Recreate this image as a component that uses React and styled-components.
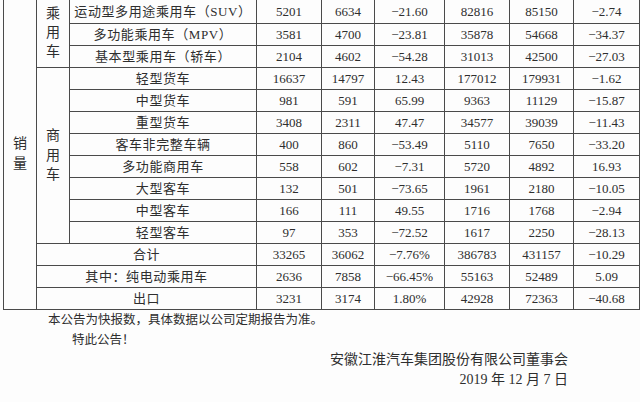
import styled, { createGlobalStyle } from "styled-components";

const GlobalStyle = createGlobalStyle`
  html, body {
    margin: 0;
    padding: 0;
    background: #fdfdfd;
  }
  body {
    width: 640px;
    height: 402px;
    overflow: hidden;
    color: #2e2e2e;
    font-family: "Liberation Serif", "Noto Sans CJK SC", serif;
  }
`;

const Page = styled.div`
  width: 640px;
  height: 402px;
  display: flex;
  flex-direction: column;
  overflow: hidden;
`;

// the table is cut at the top of the shot, so its top edge sits just above the page
const Sheet = styled.table`
  margin: -3px 0 0 3px;
  width: 636px;
  border-collapse: collapse;
  table-layout: fixed;
  font-size: 13px;
`;

const Row = styled.tr`
  height: ${({ $tall }) => ($tall ? 26 : 22)}px;
`;

const Cell = styled.td`
  border: 1px solid #4a4a4a;
  padding: 0;
  text-align: center;
  vertical-align: ${({ $low }) => ($low ? "bottom" : "middle")};
  padding-bottom: ${({ $low }) => ($low ? "5px" : "0")};
  line-height: 1;
  white-space: nowrap;
  overflow: hidden;
  letter-spacing: ${({ $wide }) => ($wide ? "0.6px" : "0")};
`;

const StackLabel = styled.div`
  display: flex;
  flex-direction: column;
  align-items: center;
  font-size: 14px;
  line-height: ${({ $step }) => $step}px;
`;

const Notes = styled.div`
  display: flex;
  flex-direction: column;
  font-size: 12.5px;
  line-height: 20px;
`;

const NoteLine = styled.div`
  padding-left: ${({ $indent }) => $indent}px;
`;

const Signature = styled.div`
  display: flex;
  flex-direction: column;
  align-items: flex-end;
  padding-right: 72px;
  font-size: 14px;
  line-height: 20px;
`;

const cols = [33, 33, 187, 65, 53, 70, 65, 64, 66];

const passenger = [
  ["运动型多用途乘用车（SUV）", "5201", "6634", "−21.60", "82816", "85150", "−2.74"],
  ["多功能乘用车（MPV）", "3581", "4700", "−23.81", "35878", "54668", "−34.37"],
  ["基本型乘用车（轿车）", "2104", "4602", "−54.28", "31013", "42500", "−27.03"],
];

const commercial = [
  ["轻型货车", "16637", "14797", "12.43", "177012", "179931", "−1.62"],
  ["中型货车", "981", "591", "65.99", "9363", "11129", "−15.87"],
  ["重型货车", "3408", "2311", "47.47", "34577", "39039", "−11.43"],
  ["客车非完整车辆", "400", "860", "−53.49", "5110", "7650", "−33.20"],
  ["多功能商用车", "558", "602", "−7.31", "5720", "4892", "16.93"],
  ["大型客车", "132", "501", "−73.65", "1961", "2180", "−10.05"],
  ["中型客车", "166", "111", "49.55", "1716", "1768", "−2.94"],
  ["轻型客车", "97", "353", "−72.52", "1617", "2250", "−28.13"],
];

const totals = [
  ["合计", "33265", "36062", "−7.76%", "386783", "431157", "−10.29"],
  ["其中：纯电动乘用车", "2636", "7858", "−66.45%", "55163", "52489", "5.09"],
  ["出口", "3231", "3174", "1.80%", "42928", "72363", "−40.68"],
];

function Stack({ text, step }) {
  return (
    <StackLabel $step={step}>
      {text.split("").map((ch, i) => (
        <span key={i}>{ch}</span>
      ))}
    </StackLabel>
  );
}

function Values({ data, low }) {
  return data.map((v, i) => (
    <Cell key={i} $low={low}>
      {v}
    </Cell>
  ));
}

export default function App() {
  const rowCount = passenger.length + commercial.length + totals.length;

  return (
    <Page>
      <GlobalStyle />
      <Sheet>
        <colgroup>
          {cols.map((w, i) => (
            <col key={i} style={{ width: w }} />
          ))}
        </colgroup>
        <tbody>
          {passenger.map(([name, ...rest], i) => (
            <Row key={name} $tall={i === 0}>
              {i === 0 && (
                <Cell rowSpan={rowCount}>
                  <Stack text="销量" step={20} />
                </Cell>
              )}
              {i === 0 && (
                <Cell rowSpan={passenger.length}>
                  <Stack text="乘用车" step={19} />
                </Cell>
              )}
              <Cell $wide $low={i === 0}>
                {name}
              </Cell>
              <Values data={rest} low={i === 0} />
            </Row>
          ))}
          {commercial.map(([name, ...rest], i) => (
            <Row key={name}>
              {i === 0 && (
                <Cell rowSpan={commercial.length}>
                  <Stack text="商用车" step={19.5} />
                </Cell>
              )}
              <Cell $wide>{name}</Cell>
              <Values data={rest} />
            </Row>
          ))}
          {totals.map(([name, ...rest]) => (
            <Row key={name}>
              <Cell colSpan={2} $wide>
                {name}
              </Cell>
              <Values data={rest} />
            </Row>
          ))}
        </tbody>
      </Sheet>
      <Notes>
        <NoteLine $indent={48}>本公告为快报数，具体数据以公司定期报告为准。</NoteLine>
        <NoteLine $indent={72}>特此公告！</NoteLine>
      </Notes>
      <Signature>
        <div>安徽江淮汽车集团股份有限公司董事会</div>
        <div>2019 年 12 月 7 日</div>
      </Signature>
    </Page>
  );
}
